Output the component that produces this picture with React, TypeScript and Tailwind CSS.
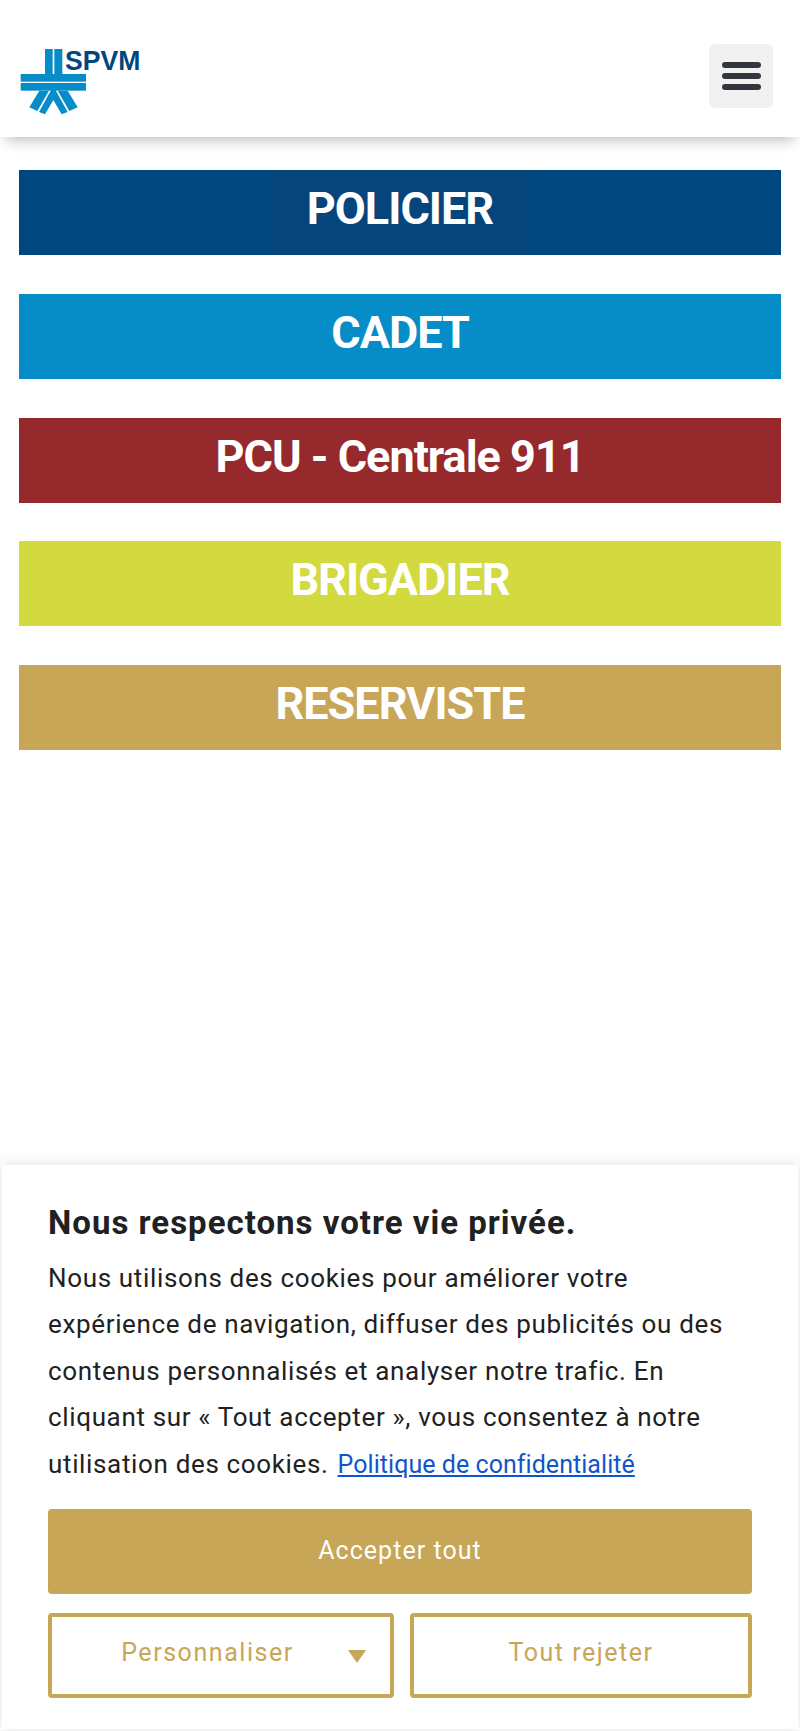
import React from 'react';

const roles = [
  { label: 'POLICIER', color: 'bg-[#00467f]', patch: true },
  { label: 'CADET', color: 'bg-[#068cc6]', patch: false },
  { label: 'PCU - Centrale 911', color: 'bg-[#96292c]', patch: false },
  { label: 'BRIGADIER', color: 'bg-[#d3da3f]', patch: false },
  { label: 'RESERVISTE', color: 'bg-[#c7a657]', patch: false },
];

const Logo = () => (
  <svg width="130" height="73" viewBox="60 126 390 219" className="block">
    <g fill="#068cc6">
      <rect x="135" y="147" width="23" height="76" />
      <rect x="163" y="147" width="24" height="76" />
      <rect x="62" y="222" width="196" height="23" />
      <rect x="62" y="249" width="196" height="23" />
      <polygon points="88,322 112,333 147,272 118,272" />
      <polygon points="233,322 208,333 173,272 203,272" />
      <polygon points="117,336 135,343 160,300 185,343 203,336 160,258" />
    </g>
    <text x="195" y="209" fill="#00467f" fontFamily="'Liberation Sans', sans-serif" fontWeight="700" fontSize="84" textLength="226" lengthAdjust="spacingAndGlyphs">
      SPVM
    </text>
  </svg>
);

export default function App() {
  return (
    <div className="relative min-h-[1731px] bg-white font-['Roboto',sans-serif]">
      <header className="flex h-[137px] items-start justify-between bg-white pr-[27px] pl-5 shadow-[0_8px_14px_-6px_rgba(0,0,0,0.3)]">
        <div className="pt-[42px]">
          <Logo />
        </div>
        <button className="mt-[44px] flex h-16 w-16 flex-col items-center justify-center gap-[5.5px] rounded-md bg-[#f1f1f1]">
          <span className="h-[5.5px] w-[39px] rounded-full bg-[#33373d]" />
          <span className="h-[5.5px] w-[39px] rounded-full bg-[#33373d]" />
          <span className="h-[5.5px] w-[39px] rounded-full bg-[#33373d]" />
        </button>
      </header>

      <main className="flex flex-col gap-[38.75px] px-[19px] pt-[33px]">
        {roles.map((role) => (
          <a key={role.label} className={`flex h-[85px] justify-center ${role.color}`}>
            <span className={`flex items-start px-[36px] pt-[12px] text-[45px] leading-[53px] font-bold tracking-[-1px] text-white ${role.patch ? 'bg-[#06457c]' : ''}`}>
              {role.label}
            </span>
          </a>
        ))}
      </main>

      <section className="absolute right-[2px] bottom-[2px] left-[2px] h-[564px] bg-white px-[46px] pt-[38px] shadow-[0_0_16px_rgba(0,0,0,0.12)]">
        <h2 className="text-[33px] leading-[40px] font-bold tracking-[1px] text-[#212121]">Nous respectons votre vie privée.</h2>
        <p className="mt-[12px] text-[26px] leading-[46.4px] tracking-[0.65px] text-[#212121]">
          Nous utilisons des cookies pour améliorer votre expérience de navigation, diffuser des publicités ou des contenus personnalisés et analyser notre trafic. En cliquant sur « Tout accepter », vous consentez à notre utilisation des cookies.
          <a className="ml-[9px] inline-block text-[25px] tracking-[0.05px] text-[#1155cc] underline">Politique de confidentialité</a>
        </p>
        <button className="mt-[21px] block h-[85px] w-full rounded-[4px] bg-[#c7a657] pb-[2px] text-[25px] tracking-[1.05px] text-white">Accepter tout</button>
        <div className="mt-[19px] flex gap-4">
          <button className="relative h-[85px] w-[346px] shrink-0 rounded-[4px] border-4 border-[#c7a657] pr-[27px] pb-[6px] text-[25px] tracking-[1.55px] text-[#c7a657]">
            Personnaliser
            <span className="absolute top-[33px] right-[24px] border-x-[9px] border-t-[13px] border-x-transparent border-t-[#c7a657]" />
          </button>
          <button className="h-[85px] flex-1 rounded-[4px] border-4 border-[#c7a657] pb-[6px] text-[25px] tracking-[1.5px] text-[#c7a657]">Tout rejeter</button>
        </div>
      </section>
    </div>
  );
}
